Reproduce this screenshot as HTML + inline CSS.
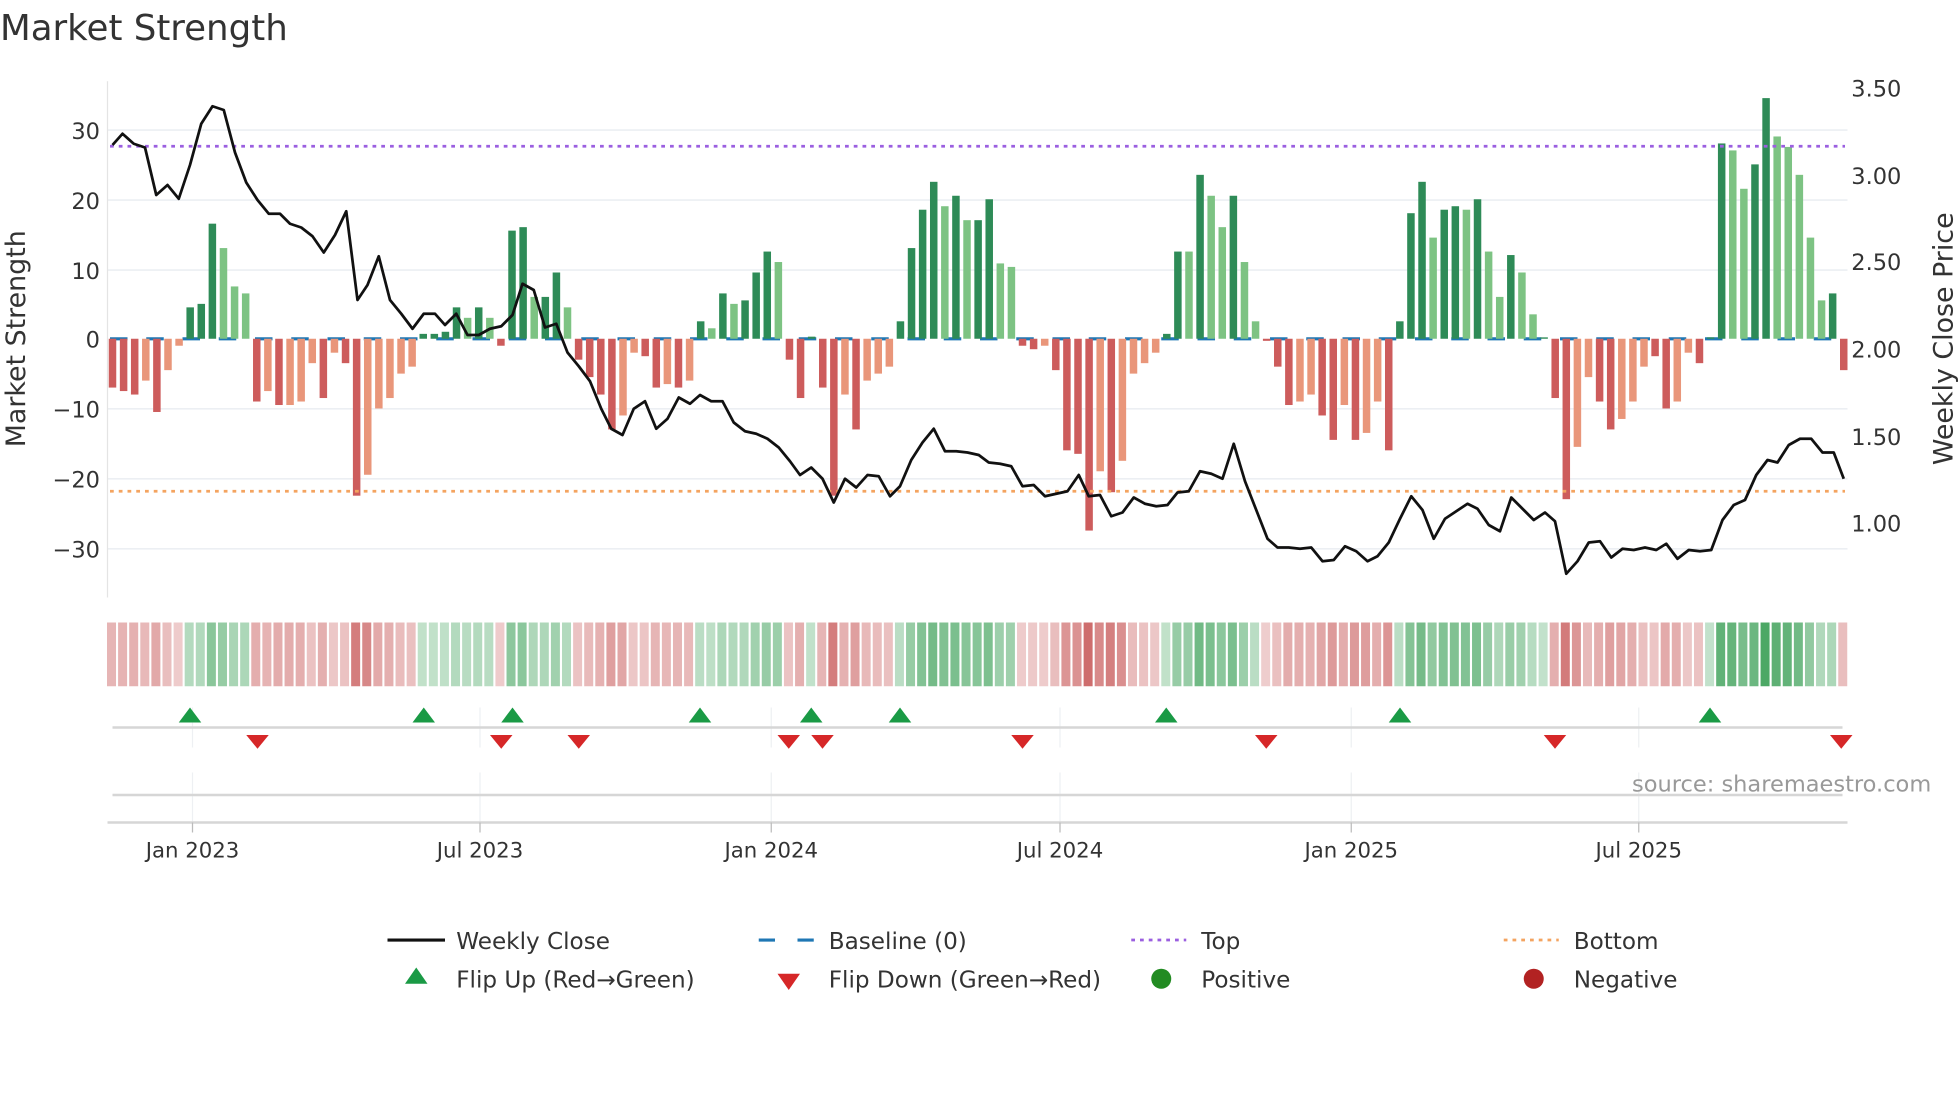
<!DOCTYPE html>
<html><head><meta charset="utf-8">
<style>
html,body{margin:0;padding:0;background:#fff;}
svg{display:block;font-family:"DejaVu Sans","Liberation Sans",sans-serif;}
</style></head>
<body>
<svg id="s" width="1960" height="1102" viewBox="0 0 1568 881.6" xmlns="http://www.w3.org/2000/svg">
<rect width="1568" height="882" fill="#fff"/>
<text x="0" y="32" font-size="28.5" fill="#333">Market Strength</text>
<g id="grid" stroke="#eceff3" stroke-width="1.3">
<line x1="86" x2="1478" y1="104" y2="104"/><line x1="86" x2="1478" y1="160" y2="160"/>
<line x1="86" x2="1478" y1="216" y2="216"/><line x1="86" x2="1478" y1="327" y2="327"/>
<line x1="86" x2="1478" y1="383" y2="383"/><line x1="86" x2="1478" y1="439" y2="439"/>
</g>
<line x1="86" x2="86" y1="65" y2="478" stroke="#e4e4e4" stroke-width="1"/>
<g font-size="18" fill="#333" text-anchor="end">
<text x="80" y="111">30</text><text x="80" y="167">20</text><text x="80" y="223">10</text>
<text x="80" y="278">0</text><text x="80" y="334">−10</text><text x="80" y="390">−20</text><text x="80" y="446">−30</text>
</g>
<g font-size="18" fill="#333">
<text x="1481" y="77">3.50</text><text x="1481" y="147">3.00</text><text x="1481" y="216">2.50</text>
<text x="1481" y="286">2.00</text><text x="1481" y="356">1.50</text><text x="1481" y="425">1.00</text>
</g>
<text transform="translate(20,271) rotate(-90)" font-size="21.5" fill="#333" text-anchor="middle">Market Strength</text>
<text transform="translate(1562,271) rotate(-90)" font-size="21.5" fill="#333" text-anchor="middle">Weekly Close Price</text>
<line x1="88" x2="1476" y1="271" y2="271" stroke="#1f77b4" stroke-width="2.5" stroke-dasharray="14,15"/>
<g id="bars"></g>
<line x1="88" x2="1476" y1="117" y2="117" stroke="#9b5fe0" stroke-width="2.2" stroke-dasharray="3,4"/>
<line x1="88" x2="1476" y1="393" y2="393" stroke="#f4a460" stroke-width="2.2" stroke-dasharray="3,4"/>
<polyline id="price" fill="none" stroke="#111" stroke-width="2.2" stroke-linejoin="round"/>
<g id="heat"></g>
<g stroke="#eef0f3" stroke-width="1">
<line x1="154" x2="154" y1="566" y2="598"/><line x1="384" x2="384" y1="566" y2="598"/><line x1="617" x2="617" y1="566" y2="598"/><line x1="848" x2="848" y1="566" y2="598"/><line x1="1081" x2="1081" y1="566" y2="598"/><line x1="1311" x2="1311" y1="566" y2="598"/>
<line x1="154" x2="154" y1="618" y2="658"/><line x1="384" x2="384" y1="618" y2="658"/><line x1="617" x2="617" y1="618" y2="658"/><line x1="848" x2="848" y1="618" y2="658"/><line x1="1081" x2="1081" y1="618" y2="658"/><line x1="1311" x2="1311" y1="618" y2="658"/>
</g>
<line x1="90" x2="1474" y1="582" y2="582" stroke="#d6d6d6" stroke-width="2"/>
<line x1="90" x2="1474" y1="636" y2="636" stroke="#d6d6d6" stroke-width="2"/>
<line x1="86" x2="1478" y1="658" y2="658" stroke="#d6d6d6" stroke-width="2"/>
<g id="flips"></g>
<g stroke="#bbb" stroke-width="1">
<line x1="154" x2="154" y1="658" y2="666"/><line x1="384" x2="384" y1="658" y2="666"/><line x1="617" x2="617" y1="658" y2="666"/><line x1="848" x2="848" y1="658" y2="666"/><line x1="1081" x2="1081" y1="658" y2="666"/><line x1="1311" x2="1311" y1="658" y2="666"/>
</g>
<g font-size="17" fill="#333" text-anchor="middle">
<text x="154" y="686">Jan 2023</text><text x="384" y="686">Jul 2023</text><text x="617" y="686">Jan 2024</text>
<text x="848" y="686">Jul 2024</text><text x="1081" y="686">Jan 2025</text><text x="1311" y="686">Jul 2025</text>
</g>
<text x="1545" y="633" font-size="18" fill="#999" text-anchor="end">source: sharemaestro.com</text>
<g font-size="18.5" fill="#333">
<line x1="310" x2="356" y1="752" y2="752" stroke="#111" stroke-width="2.5"/>
<text x="365" y="759">Weekly Close</text>
<line x1="607" x2="651" y1="752" y2="752" stroke="#1f77b4" stroke-width="2.5" stroke-dasharray="13,18"/>
<text x="663" y="759">Baseline (0)</text>
<line x1="905" x2="949" y1="752" y2="752" stroke="#9b5fe0" stroke-width="2.2" stroke-dasharray="3,4"/>
<text x="961" y="759">Top</text>
<line x1="1203" x2="1247" y1="752" y2="752" stroke="#f4a460" stroke-width="2.2" stroke-dasharray="3,4"/>
<text x="1259" y="759">Bottom</text>
<polygon points="333,774 342,787 324,787" fill="#1a9a45"/>
<text x="365" y="790">Flip Up (Red→Green)</text>
<polygon points="622,779 640,779 631,792" fill="#d62728"/>
<text x="663" y="790">Flip Down (Green→Red)</text>
<circle cx="929" cy="783" r="8" fill="#228b22"/>
<text x="961" y="790">Positive</text>
<circle cx="1227" cy="783" r="8" fill="#b22222"/>
<text x="1259" y="790">Negative</text>
</g>
</svg>
<script>
var NS="http://www.w3.org/2000/svg";
function el(t,a,p){var e=document.createElementNS(NS,t);for(var k in a)e.setAttribute(k,a[k]);document.getElementById(p).appendChild(e);return e;}
var v="-7R -7.5R -8R -6S -10.5R -4.5S -1S 4.5D 5D 16.5D 13L 7.5L 6.5L -9R -7.5S -9.5R -9.5S -9S -3.5S -8.5R -2S -3.5R -22.5R -19.5S -10S -8.5S -5S -4S 0.7D 0.7D 1D 4.5D 3L 4.5D 3L -1R 15.5D 16D 6L 6D 9.5D 4.5L -3R -5.5R -8R -13R -11S -2S -2.5R -7R -6.5S -7R -6S 2.5D 1.5L 6.5D 5L 5.5D 9.5D 12.5D 11L -3R -8.5R 0.3D -7R -22.5R -8S -13R -6S -5S -4S 2.5D 13D 18.5D 22.5D 19L 20.5D 17L 17D 20D 10.8L 10.3L -1R -1.5R -1S -4.5R -16R -16.5R -27.5R -19S -22R -17.5S -5S -3.5S -2S 0.7D 12.5D 12.5L 23.5D 20.5L 16L 20.5D 11L 2.5L -0.3R -4R -9.5R -9S -8S -11R -14.5R -9.5S -14.5R -13.5S -9S -16R 2.5D 18D 22.5D 14.5L 18.5D 19D 18.5L 20D 12.5L 6L 12D 9.5L 3.5L 0.2D -8.5R -23R -15.5S -5.5S -9R -13R -11.5S -9S -4S -2.5R -10R -9S -2S -3.5R 0.2D 28D 27L 21.5L 25D 34.5D 29L 27.5L 23.5L 14.5L 5.5L 6.5D -4.5R".split(" ");
var C={D:"#2e8b57",L:"#7dc383",R:"#cd5c5c",S:"#e9967a"};
var n=v.length, x0=90, dx=(1475-90)/(n-1);
for(var i=0;i<n;i++){
 var s=v[i], c=s.slice(-1), val=parseFloat(s), x=x0+i*dx;
 var y0=271, y1=271-val*5.58;
 el("rect",{x:x-3,y:Math.min(y0,y1),width:6,height:Math.max(Math.abs(y1-y0),0.8),fill:C[c]},"bars");
 var a, col;
 if(val>=0){a=0.28+0.55*Math.min(val/34,1);col="rgba(40,150,70,"+a+")";}
 else{a=0.25+0.5*Math.min(-val/27,1);col="rgba(190,60,60,"+a+")";}
 el("rect",{x:x-4.4,y:498,width:7.2,height:51,fill:col},"heat");
}
var p="90,116 98,107 107,115 116,118 125,156 134,148 143,159 152,132 161,99 170,85 179,88 188,122 197,146 206,160 215,171 224,171 232,179 241,182 250,189 259,202 268,188 277,169 286,240 294,228 303,205 312,240 321,251 330,263 339,251 348,251 356,260 365,251 374,268 383,268 392,263 401,261 410,252 418,227 427,232 436,262 445,259 454,282 463,293 472,305 481,327 489,343 498,348 507,327 516,321 525,343 534,335 543,318 552,323 560,316 569,321 578,321 587,338 596,345 605,347 614,351 623,358 632,369 640,380 649,374 658,383 667,402 676,383 685,390 694,380 703,381 712,397 720,389 729,368 738,354 747,343 756,361 765,361 774,362 783,364 791,370 800,371 809,373 818,389 827,388 836,397 845,395 854,393 863,380 871,397 880,396 889,413 898,410 907,398 916,403 925,405 934,404 942,394 951,393 960,377 969,379 978,383 987,355 996,385 1005,408 1014,431 1022,438 1031,438 1040,439 1049,438 1058,449 1067,448 1076,437 1085,441 1094,449 1102,445 1111,434 1120,415 1129,397 1138,408 1147,431 1156,415 1165,409 1174,403 1182,407 1191,420 1200,425 1209,398 1218,407 1227,416 1236,410 1244,417 1253,459 1262,449 1271,434 1280,433 1289,446 1298,439 1307,440 1316,438 1325,440 1333,435 1342,447 1351,440 1360,441 1369,440 1378,416 1387,404 1396,400 1405,380 1414,368 1422,370 1431,356 1440,351 1449,351 1458,362 1467,362 1475,383";
document.getElementById("price").setAttribute("points",p);
[152,339,410,560,649,720,933,1120,1368].forEach(function(x){
 el("polygon",{points:(x)+",566 "+(x+9)+",578 "+(x-9)+",578",fill:"#1a9a45"},"flips");});
[206,401,463,631,658,818,1013,1244,1473].forEach(function(x){
 el("polygon",{points:(x-9)+",588 "+(x+9)+",588 "+x+",599",fill:"#d62728"},"flips");});
</script>
</body></html>
